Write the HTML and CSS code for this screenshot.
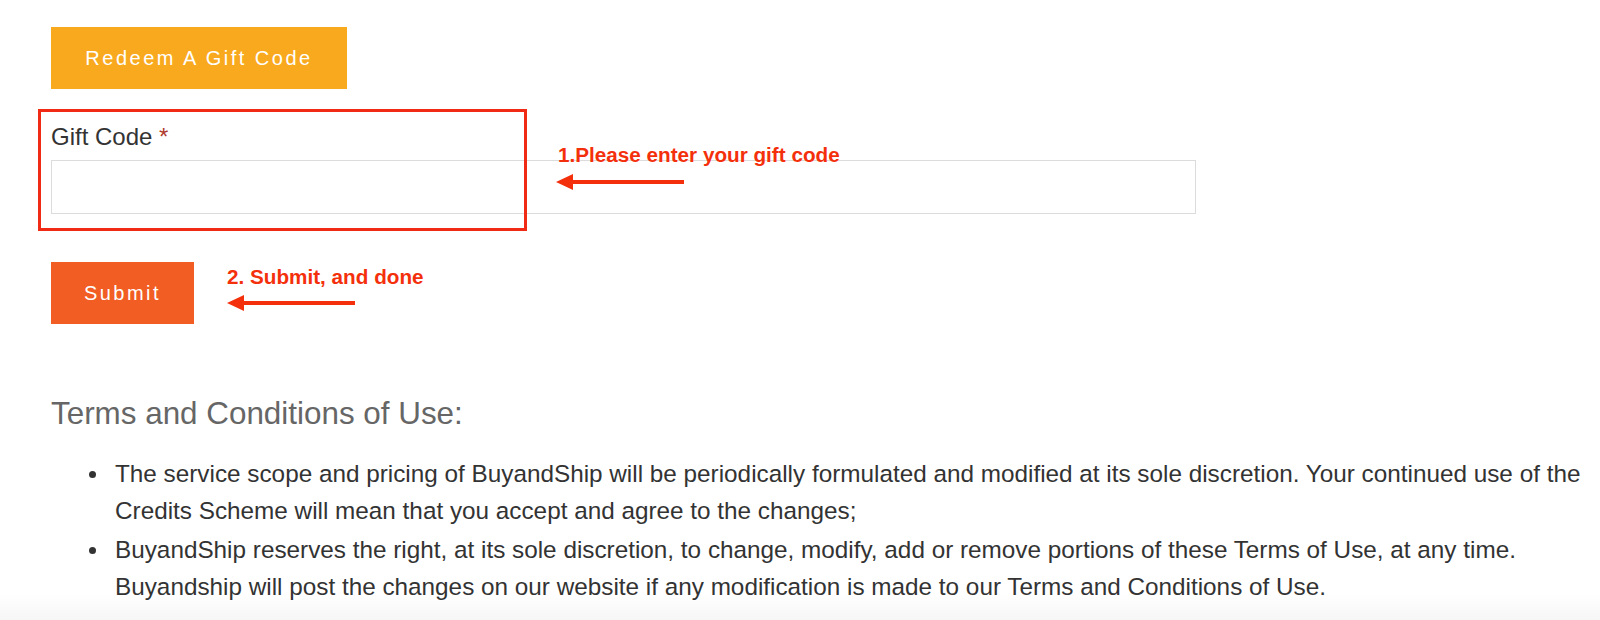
FILE: index.html
```html
<!DOCTYPE html>
<html lang="en">
<head>
  <meta charset="UTF-8" />
  <title>Redeem A Gift Code</title>
  <link rel="stylesheet" href="styles.css">
</head>
<body>
  <main class="page">
    <button class="btn btn-redeem" type="button">Redeem A Gift Code</button>

    <form class="gift-form">
      <div class="field">
        <label for="giftCode">Gift Code <span class="required">*</span></label>
        <input type="text" id="giftCode" />

        <!-- annotation: step 1 -->
        <div class="mark-box"></div>
        <div class="note note-one">
          <span>1.Please enter your gift code</span>
          <svg class="arrow" width="130" height="20" viewBox="0 0 130 20">
            <path d="M14 10 H128" stroke="#f4300c" stroke-width="4" />
            <path d="M0 10 L17 2 L17 18 Z" fill="#f4300c" />
          </svg>
        </div>
      </div>

      <div class="submit-row">
        <button class="btn btn-submit" type="submit">Submit</button>
        <div class="note note-two">
          <span>2. Submit, and done</span>
          <svg class="arrow" width="130" height="20" viewBox="0 0 130 20">
            <path d="M14 10 H128" stroke="#f4300c" stroke-width="4" />
            <path d="M0 10 L17 2 L17 18 Z" fill="#f4300c" />
          </svg>
        </div>
      </div>
    </form>

    <section class="terms">
      <h3>Terms and Conditions of Use:</h3>
      <ul>
        <li>The service scope and pricing of BuyandShip will be periodically formulated and modified at its sole discretion. Your continued use of the Credits Scheme will mean that you accept and agree to the changes;</li>
        <li>BuyandShip reserves the right, at its sole discretion, to change, modify, add or remove portions of these Terms of Use, at any time. Buyandship will post the changes on our website if any modification is made to our Terms and Conditions of Use.</li>
      </ul>
    </section>
  </main>
  <div class="fade"></div>
</body>
</html>
```

FILE: styles.css
```css
* {
  margin: 0;
  padding: 0;
  box-sizing: border-box;
}

body {
  font-family: 'Liberation Sans', Arial, sans-serif;
  background: #fff;
  color: #333;
  overflow: hidden;
}

.page {
  padding: 27px 0 0 51px;
}

.btn {
  display: block;
  border: none;
  color: #fff;
  font-family: inherit;
  font-size: 20px;
  letter-spacing: 2.5px;
  height: 62px;
  cursor: pointer;
}

.btn-redeem {
  width: 296px;
  background: #f9a91d;
}

.btn-submit {
  width: 143px;
  background: #f15d22;
}

.field {
  position: relative;
  margin-top: 35px;
  width: 1145px;
}

.field label {
  display: block;
  font-size: 24px;
  line-height: 26px;
  color: #333;
  margin-bottom: 10px;
}

.required {
  color: #b03a2e;
}

.field input {
  display: block;
  width: 100%;
  height: 54px;
  border: 1px solid #dcdcdc;
  background: #fff;
  font-size: 16px;
  padding: 0 12px;
}

.mark-box {
  position: absolute;
  left: -13px;
  top: -15px;
  width: 489px;
  height: 122px;
  border: 3px solid #f02a14;
}

.note span {
  display: block;
  font-weight: bold;
  font-size: 20.7px;
  line-height: 24px;
  color: #f4300c;
}

.note .arrow {
  display: block;
}

.note-one {
  position: absolute;
  left: 505px;
  top: 19px;
}

.note-one span {
  padding-left: 2px;
}

.note-one .arrow {
  margin-top: 5px;
}

.submit-row {
  display: flex;
  align-items: flex-start;
  gap: 33px;
  margin-top: 48px;
}

.note-two {
  padding-top: 3px;
}

.note-two .arrow {
  margin-top: 4px;
}

.terms {
  margin-top: 72px;
}

.terms h3 {
  font-weight: normal;
  font-size: 31.4px;
  line-height: 36px;
  color: #666;
}

.terms ul {
  list-style: none;
  margin-top: 23px;
  padding-left: 64px;
  padding-right: 8px;
}

.terms li {
  position: relative;
  font-size: 24.3px;
  line-height: 37px;
  color: #333;
  margin-bottom: 2px;
}

.terms li::before {
  content: "";
  position: absolute;
  left: -26px;
  top: 16px;
  width: 7px;
  height: 7px;
  border-radius: 50%;
  background: #333;
}

.fade {
  position: fixed;
  left: 0;
  right: 0;
  bottom: 0;
  height: 26px;
  background: linear-gradient(to bottom, rgba(0, 0, 0, 0), rgba(0, 0, 0, 0.035));
  pointer-events: none;
}
```
